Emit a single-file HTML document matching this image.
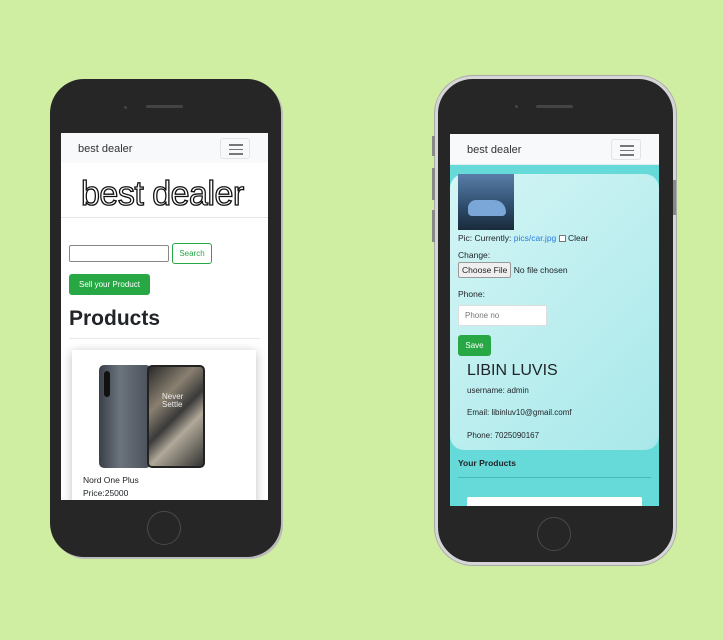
<!DOCTYPE html>
<html><head><meta charset="utf-8"><style>
*{margin:0;padding:0;box-sizing:border-box}
body{width:723px;height:640px;background:#cfeea2;position:relative;overflow:hidden;font-family:"Liberation Sans",sans-serif;color:#212529}
.abs{position:absolute}
.phone{position:absolute;background:#262626;}
.screen{position:absolute;background:#fff;overflow:hidden}
.nav{position:absolute;left:0;right:0;top:0;height:30px;background:#f8f9fa;font-size:11px;color:#333}
.tog{position:absolute;width:30px;height:21px;border:1px solid #e2e3e5;border-radius:3px}
.tog i{position:absolute;left:8px;width:14px;height:1.5px;background:#777}
.home{position:absolute;width:34px;height:34px;border-radius:50%;border:1.5px solid #4a4a4a}
.t9{font-size:8.5px;position:absolute;white-space:nowrap}
</style></head><body>

<!-- left phone -->
<div class="phone" style="left:50px;top:79px;width:231px;height:478px;border-radius:34px;box-shadow:2px 2px 0 #bbb"></div>
<div class="abs" style="left:124px;top:106px;width:3px;height:3px;border-radius:50%;background:#444"></div>
<div class="abs" style="left:146px;top:105px;width:37px;height:3px;border-radius:2px;background:#444"></div>
<div class="home" style="left:147px;top:511px"></div>
<div class="screen" style="left:61px;top:133px;width:207px;height:367px">
  <div class="nav"><span class="abs" style="left:17px;top:10px">best dealer</span>
    <div class="tog" style="left:159px;top:5px"><i style="top:5px"></i><i style="top:9.5px"></i><i style="top:14px"></i></div></div>
  <div class="abs" style="left:20px;top:42px;font-size:34px;color:#fff;-webkit-text-stroke:1.3px #111;white-space:nowrap;letter-spacing:-0.5px">best dealer</div>
  <div class="abs" style="left:0;right:0;top:84px;border-top:1px solid #e5e5e5"></div>
  <div class="abs" style="left:8px;top:112px;width:100px;height:17px;border:1px solid #888;border-radius:2px"></div>
  <div class="abs" style="left:111px;top:110px;width:40px;height:21px;border:1px solid #28a745;border-radius:3px;color:#28a745;font-size:8px;text-align:center;line-height:19px">Search</div>
  <div class="abs" style="left:8px;top:141px;width:81px;height:21px;background:#28a745;border-radius:3px;color:#fff;font-size:8px;text-align:center;line-height:21px">Sell your Product</div>
  <div class="abs" style="left:8px;top:174px;font-size:21px;font-weight:bold">Products</div>
  <div class="abs" style="left:8px;right:8px;top:205px;border-top:1px solid #e8e8e8"></div>
  <div class="abs" style="left:11px;top:217px;width:184px;height:160px;background:#fff;box-shadow:0 2px 10px rgba(0,0,0,.25)"></div>
  <div class="abs" style="left:38px;top:232px;width:52px;height:103px;border-radius:5px;background:linear-gradient(90deg,#3a4048,#6b737c 40%,#4a5058)"></div>
  <div class="abs" style="left:43px;top:238px;width:6px;height:26px;border-radius:3px;background:#111"></div>
  <div class="abs" style="left:86px;top:232px;width:58px;height:103px;border-radius:5px;border:2px solid #222;background:linear-gradient(135deg,#2a2a2a,#8a8070 30%,#3a3a3a 50%,#b0a898 65%,#333)"></div>
  <div class="abs" style="left:101px;top:260px;font-size:8px;color:#eee;line-height:8px">Never<br>Settle</div>
  <div class="t9" style="left:22px;top:342px">Nord One Plus</div>
  <div class="t9" style="left:22px;top:355px">Price:25000</div>
</div>

<!-- right phone -->
<div class="phone" style="left:435px;top:76px;width:241px;height:489px;border-radius:38px;border:3px solid #d6d6d6;box-shadow:0 0 0 1px #aaa"></div>
<div class="abs" style="left:432px;top:136px;width:3px;height:20px;background:#888"></div>
<div class="abs" style="left:432px;top:168px;width:3px;height:32px;background:#888"></div>
<div class="abs" style="left:432px;top:210px;width:3px;height:32px;background:#888"></div>
<div class="abs" style="left:673px;top:180px;width:3px;height:35px;background:#888"></div>
<div class="abs" style="left:515px;top:105px;width:3px;height:3px;border-radius:50%;background:#444"></div>
<div class="abs" style="left:536px;top:105px;width:37px;height:3px;border-radius:2px;background:#444"></div>
<div class="home" style="left:537px;top:517px"></div>
<div class="screen" style="left:450px;top:134px;width:209px;height:372px;background:#66d9d9">
  <div class="nav" style="height:31px;border-bottom:1px solid #e0eeee"><span class="abs" style="left:17px;top:10px">best dealer</span>
    <div class="tog" style="left:161px;top:5px"><i style="top:5px"></i><i style="top:9.5px"></i><i style="top:14px"></i></div></div>
  <div class="abs" style="left:0;top:40px;width:209px;height:276px;border-radius:14px;background:linear-gradient(135deg,#d4f5f5,#a8e8ea)"></div>
  <div class="abs" style="left:8px;top:40px;width:56px;height:56px;background:linear-gradient(180deg,#5a7ea8,#2c4b6a 60%,#1a2a3a)"></div>
  <div class="abs" style="left:18px;top:66px;width:38px;height:16px;border-radius:8px 12px 4px 4px;background:#7ba6d8"></div>
  <div class="t9" style="left:8px;top:99px">Pic: Currently: <span style="color:#2a7de1">pics/car.jpg</span> <span style="display:inline-block;width:7px;height:7px;border:1px solid #777;background:#fff;vertical-align:-1px"></span> Clear</div>
  <div class="t9" style="left:8px;top:116px">Change:</div>
  <div class="t9" style="left:8px;top:128px"><span style="display:inline-block;border:1px solid #999;background:#efefef;padding:2px 3px;border-radius:2px">Choose File</span> No file chosen</div>
  <div class="t9" style="left:8px;top:155px">Phone:</div>
  <div class="abs" style="left:8px;top:171px;width:89px;height:21px;background:#fff;border:1px solid #ddd;border-radius:2px;font-size:8px;color:#777;padding:5px 6px">Phone no</div>
  <div class="abs" style="left:8px;top:201px;width:33px;height:21px;background:#28a745;border-radius:3px;color:#fff;font-size:8px;text-align:center;line-height:21px">Save</div>
  <div class="abs" style="left:17px;top:228px;font-size:16px;white-space:nowrap">LIBIN LUVIS</div>
  <div class="t9" style="left:17px;top:252px;font-size:8px">username: admin</div>
  <div class="t9" style="left:17px;top:274px;font-size:8px">Email: libinluv10@gmail.comf</div>
  <div class="t9" style="left:17px;top:297px;font-size:8px">Phone: 7025090167</div>
  <div class="t9" style="left:8px;top:324px;font-size:8.5px;font-weight:bold">Your Products</div>
  <div class="abs" style="left:8px;right:8px;top:343px;border-top:1.5px solid #4bb8b8"></div>
  <div class="abs" style="left:17px;top:363px;width:175px;height:20px;background:#fff;border-radius:2px"></div>
</div>
</body></html>
